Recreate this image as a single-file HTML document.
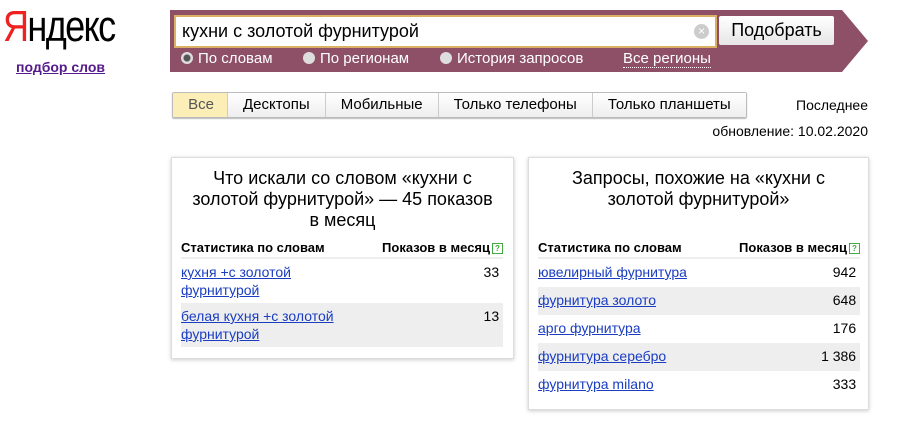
<html><head><style>
body{margin:0;width:900px;height:430px;background:#fff;font-family:"Liberation Sans",Arial,sans-serif;position:relative;overflow:hidden;color:#000}
.a{position:absolute}
a{color:#1a3dc1;text-decoration:underline}
.logo{left:3px;top:2px;font-size:44px;letter-spacing:-2px;transform:scaleX(.82);transform-origin:left}
.band{left:170px;top:10px;width:698px;height:62px;background:#8e5067;clip-path:polygon(0 0,672px 0,698px 31px,672px 62px,0 62px)}
.inp{left:174px;top:15px;width:533px;height:29px;border:2px solid #d9b064;background:#fff;font-size:18px;line-height:29px;padding-left:6px;box-sizing:content-box}
.btn{left:719px;top:16px;width:115px;height:29px;background:linear-gradient(#fff,#e6e6e6);border-radius:2px;font-size:18px;text-align:center;line-height:29px}
.rad{color:#fff;font-size:15px;top:50px}
.rad i{display:inline-block;width:12px;height:12px;border-radius:50%;background:#ddd;vertical-align:-1px;margin-right:5px}
.tabs{left:172px;top:92px;display:flex;border:1px solid #bbb;border-radius:2px;box-shadow:0 1px 1px #bbb}
.tabs div{font-size:15px;padding:0 15px;height:24px;line-height:24px;border-left:1px solid #ccc;background:linear-gradient(#fff,#eee)}
.tabs div:first-child{border:0;background:#fbeeb7;color:#555;width:28px;padding:0 12px 0 14px;text-align:center}
.box{border:1px solid #ddd;box-shadow:0 1px 4px #ccc;background:#fff}
.t{font-size:18px;text-align:center;line-height:21px}
table{border-collapse:collapse;font-size:14px;position:absolute}
th{font-size:13px;text-align:left;font-weight:bold;border-bottom:2px solid #eee;height:20px;padding:0}
td{vertical-align:top;padding:4px 0 4px 0;line-height:18px}
.r td{padding:4px 0 6px}
td:last-child,th:last-child{text-align:right}
tr.g td{background:#eee}
.q{display:inline-block;width:9px;height:9px;border:1px solid #4a4;font-size:8px;color:#4a4;line-height:9px;text-align:center;vertical-align:1px;margin-left:2px}
</style></head><body>
<div class="a logo"><span style="color:#e22">Я</span>ндекс</div>
<a class="a" style="left:16px;top:59px;font-size:14px;font-weight:bold;color:#551a8b">подбор слов</a>
<div class="a band"></div>
<div class="a inp">кухни с золотой фурнитурой<span style="position:absolute;right:6px;top:7px;width:15px;height:15px;border-radius:50%;background:#ccc;color:#fff;font-size:12px;line-height:15px;text-align:center">×</span></div>
<div class="a btn">Подобрать</div>
<div class="a rad" style="left:181px"><i style="background:radial-gradient(#555 3px,#ddd 4px)"></i>По словам</div>
<div class="a rad" style="left:303px"><i></i>По регионам</div>
<div class="a rad" style="left:440px"><i></i>История запросов</div>
<div class="a rad" style="left:623px;border-bottom:1px dotted #fff">Все регионы</div>
<div class="a tabs"><div>Все</div><div>Десктопы</div><div>Мобильные</div><div>Только телефоны</div><div>Только планшеты</div></div>
<div class="a" style="right:32px;top:97px;font-size:14px">Последнее</div>
<div class="a" style="right:32px;top:123px;font-size:14px">обновление: 10.02.2020</div>
<div class="a box" style="left:171px;top:157px;width:341px;height:200px">
<div class="t" style="margin-top:10px">Что искали со словом «кухни с<br>золотой фурнитурой» — 45 показов<br>в месяц</div>
<table style="left:9px;top:80px;width:322px">
<tr><th>Статистика по словам</th><th>Показов в месяц<span class="q">?</span></th></tr>
<tr><td><a>кухня +с золотой<br>фурнитурой</a></td><td>33&nbsp;</td></tr>
<tr class="g"><td><a>белая кухня +с золотой<br>фурнитурой</a></td><td>13&nbsp;</td></tr>
</table></div>
<div class="a box" style="left:528px;top:157px;width:339px;height:251px">
<div class="t" style="margin-top:10px">Запросы, похожие на «кухни с<br>золотой фурнитурой»</div>
<table class="r" style="left:9px;top:80px;width:322px">
<tr><th>Статистика по словам</th><th>Показов в месяц<span class="q">?</span></th></tr>
<tr><td><a>ювелирный фурнитура</a></td><td>942&nbsp;</td></tr>
<tr class="g"><td><a>фурнитура золото</a></td><td>648&nbsp;</td></tr>
<tr><td><a>арго фурнитура</a></td><td>176&nbsp;</td></tr>
<tr class="g"><td><a>фурнитура серебро</a></td><td>1 386&nbsp;</td></tr>
<tr><td><a>фурнитура milano</a></td><td>333&nbsp;</td></tr>
</table></div>
</body></html>
